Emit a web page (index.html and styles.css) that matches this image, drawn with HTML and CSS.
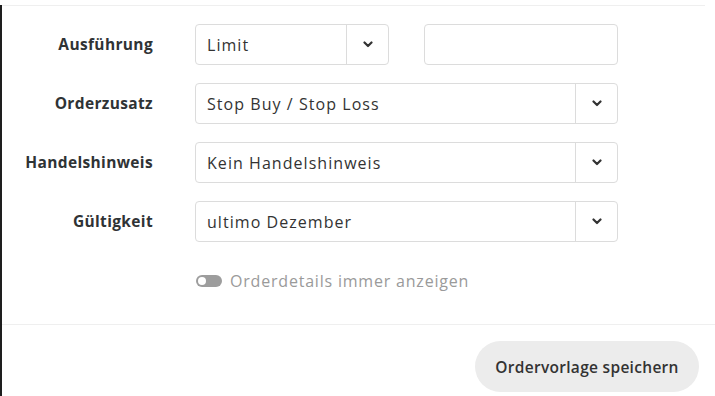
FILE: index.html
```html
<!DOCTYPE html>
<html lang="de">
<head>
<meta charset="utf-8">
<link rel="stylesheet" href="styles.css">
</head>
<body>
<div class="panel">
  <div class="top-rule"></div>
  <div class="form">
    <div class="row">
      <div class="label">Ausführung</div>
      <div class="fields">
        <div class="select select-short">
          <span class="value">Limit</span>
          <span class="arrow"><svg width="10" height="7" viewBox="0 0 10 7"><path d="M1.5 1.5 L5 5 L8.5 1.5" fill="none" stroke="#333" stroke-width="2.2" stroke-linecap="round" stroke-linejoin="round"/></svg></span>
        </div>
        <div class="input"></div>
      </div>
    </div>
    <div class="row">
      <div class="label">Orderzusatz</div>
      <div class="fields">
        <div class="select select-wide">
          <span class="value">Stop Buy / Stop Loss</span>
          <span class="arrow"><svg width="10" height="7" viewBox="0 0 10 7"><path d="M1.5 1.5 L5 5 L8.5 1.5" fill="none" stroke="#333" stroke-width="2.2" stroke-linecap="round" stroke-linejoin="round"/></svg></span>
        </div>
      </div>
    </div>
    <div class="row">
      <div class="label">Handelshinweis</div>
      <div class="fields">
        <div class="select select-wide">
          <span class="value">Kein Handelshinweis</span>
          <span class="arrow"><svg width="10" height="7" viewBox="0 0 10 7"><path d="M1.5 1.5 L5 5 L8.5 1.5" fill="none" stroke="#333" stroke-width="2.2" stroke-linecap="round" stroke-linejoin="round"/></svg></span>
        </div>
      </div>
    </div>
    <div class="row">
      <div class="label">Gültigkeit</div>
      <div class="fields">
        <div class="select select-wide">
          <span class="value">ultimo Dezember</span>
          <span class="arrow"><svg width="10" height="7" viewBox="0 0 10 7"><path d="M1.5 1.5 L5 5 L8.5 1.5" fill="none" stroke="#333" stroke-width="2.2" stroke-linecap="round" stroke-linejoin="round"/></svg></span>
        </div>
      </div>
    </div>
    <div class="toggle-row">
      <span class="toggle"><span class="knob"></span></span>
      <span class="toggle-text">Orderdetails immer anzeigen</span>
    </div>
  </div>
  <div class="bottom-rule"></div>
  <div class="actions">
    <button class="save">Ordervorlage speichern</button>
  </div>
</div>
</body>
</html>
```
FILE: styles.css
```css
html, body {
  margin: 0;
  padding: 0;
  background: #fff;
}
body {
  width: 715px;
  height: 396px;
  overflow: hidden;
  font-family: "Open Sans", "Noto Sans", sans-serif;
  color: #333;
}
.panel {
  border-left: 2px solid #1e1e1e;
  height: 396px;
  box-sizing: border-box;
}
.top-rule {
  margin-top: 5px;
  margin-right: 10px;
  height: 1px;
  background: #efefef;
}
.form {
  padding-top: 18px;
  display: flex;
  flex-direction: column;
  gap: 18px;
}
.row {
  display: flex;
  align-items: center;
  height: 41px;
}
.label {
  width: 151px;
  text-align: right;
  font-weight: 700;
  font-size: 15.5px;
  letter-spacing: 0.35px;
  color: #2f3335;
  margin-right: 42px;
  margin-top: -2px;
  white-space: nowrap;
}
.fields {
  display: flex;
  gap: 35px;
  height: 41px;
}
.select, .input {
  box-sizing: border-box;
  height: 41px;
  border: 1px solid #dcdcdc;
  border-radius: 4px;
  background: #fff;
  display: flex;
  align-items: stretch;
}
.select-short { width: 194px; }
.select-wide { width: 423px; }
.input { width: 194px; }
.value {
  flex: 1;
  display: flex;
  align-items: center;
  padding-left: 11px;
  font-size: 16px;
  color: #333;
  letter-spacing: 1.05px;
}
.arrow {
  width: 41px;
  border-left: 1px solid #dcdcdc;
  display: flex;
  align-items: center;
  justify-content: center;
}
.toggle-row {
  display: flex;
  align-items: center;
  margin-left: 194px;
  margin-top: 11px;
  gap: 8px;
  height: 20px;
}
.toggle {
  width: 26px;
  height: 12px;
  border-radius: 6px;
  background: #9d9d9d;
  position: relative;
  display: inline-block;
}
.knob {
  position: absolute;
  left: 2px;
  top: 2px;
  width: 8px;
  height: 8px;
  border-radius: 50%;
  background: #fff;
}
.toggle-text {
  font-size: 16px;
  color: #9a9a9a;
  letter-spacing: 0.8px;
}
.bottom-rule {
  margin-top: 33px;
  height: 1px;
  background: #efefef;
}
.actions {
  display: flex;
  justify-content: flex-end;
  padding-top: 16px;
  padding-right: 16px;
}
.save {
  width: 224px;
  height: 51px;
  border: none;
  border-radius: 26px;
  background: #ececec;
  font-family: "Open Sans", "Noto Sans", sans-serif;
  font-weight: 600;
  font-size: 15.5px;
  color: #333;
  letter-spacing: 0.3px;
}
```
